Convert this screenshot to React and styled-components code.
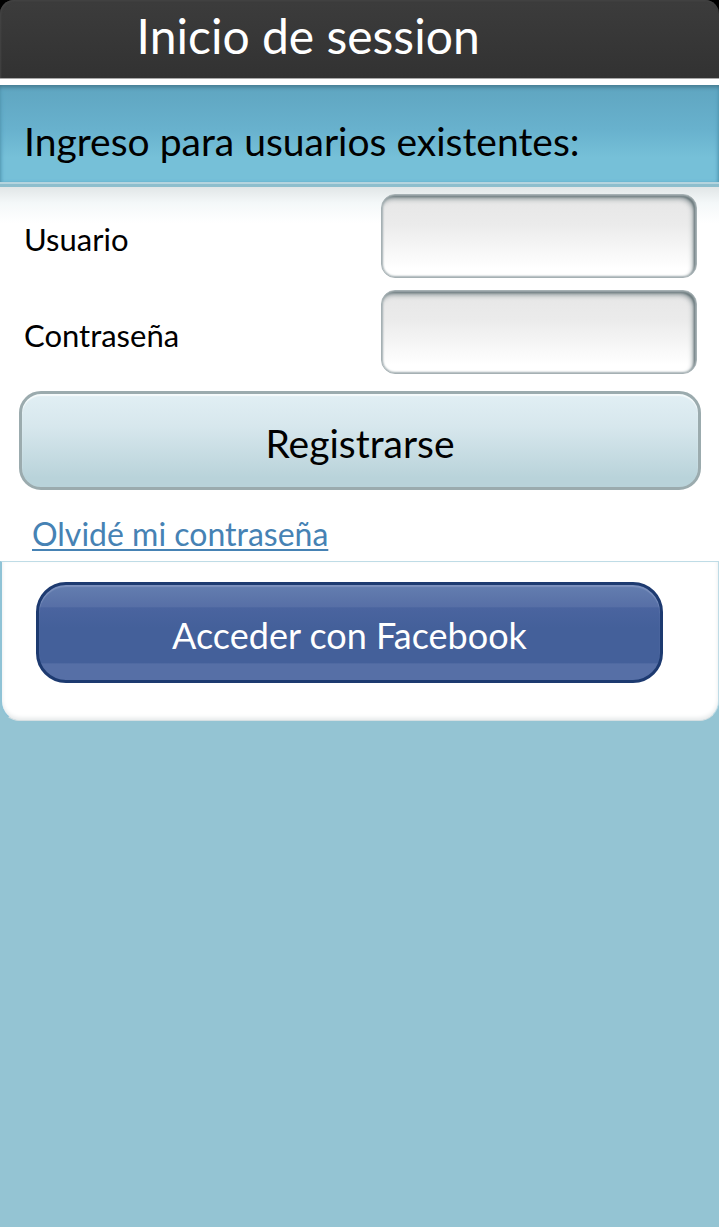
import { useState } from "react";
import styled, { createGlobalStyle } from "styled-components";


export default function App() {
    const [user, setUser] = useState('');
    const [password, setPassword] = useState('');

    function login (e) {
        e.preventDefault();
    }

    return (
        <Screen>
            <GlobalStyle />
            <TopBar>
                <Header>
                    <Title>Inicio de session</Title>
                </Header>
            </TopBar>
            <SectionBar>
                <SectionTitle>Ingreso para usuarios existentes:</SectionTitle>
            </SectionBar>
            <Form onSubmit={login}>
                <Row>
                    <Label htmlFor="user">Usuario</Label>
                    <Input id="user" type="text" value={user} onChange={e => setUser(e.target.value)} />
                </Row>
                <Row>
                    <Label htmlFor="password">Contraseña</Label>
                    <Input id="password" type="password" value={password} onChange={e => setPassword(e.target.value)} />
                </Row>
                <SubmitButton type="submit">Registrarse</SubmitButton>
                <ForgotLink href="#">Olvidé mi contraseña</ForgotLink>
            </Form>
            <SocialPanel>
                <FacebookButton type="button">Acceder con Facebook</FacebookButton>
            </SocialPanel>
        </Screen>
    );
}

const GlobalStyle = createGlobalStyle`
    * {
        box-sizing: border-box;
    }
    body {
        margin: 0;
        background-color: #94C4D3;
        font-family: 'Choco cooky', Lato, sans-serif;
        color: #000000;
    }
    button, input {
        font-family: inherit;
    }
`;

const Screen = styled.div`
    display: flex;
    flex-direction: column;
    min-height: 100vh;
    background-color: #94C4D3;
`;

const TopBar = styled.div`
    background-color: #000000;
    border-bottom: 6px solid #FFFFFF;
`;

const Header = styled.header`
    height: 79px;
    padding: 0 19%;
    border-radius: 14px 14px 0 0;
    border-bottom: 1px solid #A8A8A8;
    background: linear-gradient(#3C3C3C, #323232);
    box-shadow: inset 1px 1px 2px #444444;
`;

const Title = styled.h1`
    margin: 0;
    font-weight: 400;
    font-size: 48px;
    line-height: 72px;
    color: #FFFFFF;
    white-space: nowrap;
`;

const SectionBar = styled.div`
    padding: 32px 24px 17px 24px;
    border-bottom: 2px solid #B5D4DE;
    background: linear-gradient(#5FA5C0, #68B1CD 45%, #76C0D8 75%, #76C0D8);
    box-shadow: inset 0 3px 4px -1px #45788C, inset 3px 0 4px -2px #5BA8C6, inset -3px 0 4px -2px #5BA8C6;
`;

const SectionTitle = styled.h2`
    margin: 0;
    font-weight: 400;
    font-size: 39px;
    line-height: 48px;
`;

const Form = styled.form`
    display: flex;
    flex-direction: column;
    gap: 12px;
    padding: 7px 0 9px 0;
    border-top: 3px solid #8DBECD;
    background: linear-gradient(#E1E6E7, #F4F8F9 16px, #FFFFFF 36px);
`;

const Row = styled.div`
    display: grid;
    grid-template-columns: 1fr 47%;
    align-items: center;
    padding: 0 22px 0 24px;
`;

const Label = styled.label`
    font-size: 31px;
    line-height: 36px;
    padding-top: 6px;
`;

const Input = styled.input`
    width: 100%;
    height: 84px;
    padding: 0 16px;
    border: 1px solid #A5B0B3;
    border-radius: 14px;
    background: linear-gradient(#E6E6E6, #EBEBEB 35%, #FFFFFF 90%);
    box-shadow: inset 0 0 2px 1px #A5B0B3, inset -2px 2px 2px #5F6E72, inset -3px 4px 5px #8E999C;
    font-size: 31px;
    :focus {
        outline: 0;
    }
`;

const SubmitButton = styled.button`
    height: 99px;
    margin: 5px 18px 0 19px;
    padding: 4px 16px 0 16px;
    border: 3px solid #9BABAE;
    border-radius: 22px;
    background: linear-gradient(#E1EFF4, #D7E7ED 35%, #B9D3DA 90%);
    box-shadow: inset 0 2px 1px #F5FAFB;
    font-size: 39px;
    line-height: 48px;
    color: #000000;
`;

const ForgotLink = styled.a`
    align-self: flex-start;
    margin: 14px 0 0 32px;
    font-size: 32px;
    line-height: 36px;
    color: #4682B4;
    text-decoration-thickness: 2px;
    text-underline-offset: 3px;
    text-decoration-skip-ink: none;
`;

const SocialPanel = styled.section`
    display: flex;
    padding: 20px 55px 37px 34px;
    border: 1px solid #BFDCE6;
    border-left: 2px solid #8FC3D6;
    border-bottom-color: #D5DFE2;
    border-radius: 0 0 20px 20px;
    background-color: #FFFFFF;
    box-shadow: inset 0 -2px 4px #E6E9EA;
`;

const FacebookButton = styled.button`
    flex: 1;
    height: 101px;
    padding: 4px 16px 0 16px;
    border: 3px solid #1D3A70;
    border-radius: 30px;
    background: linear-gradient(#647EB0, #576FA6 23%, #4A649F 24%, #44609A 45%, #44609A 82%, #566FA6 83%, #566FA6);
    box-shadow: inset 0 2px 1px #7C91BE;
    font-size: 36px;
    line-height: 48px;
    color: #FFFFFF;
`;
